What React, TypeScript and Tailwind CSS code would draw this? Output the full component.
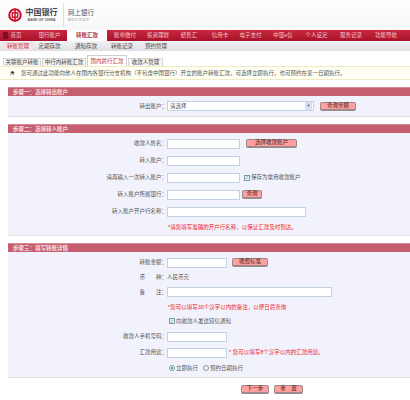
import React from "react";

const font = "font-['Liberation_Sans','Noto_Sans_CJK_SC',sans-serif]";

const navItems = [
  { label: "首页", width: "w-[32px]" },
  { label: "银行账户", width: "w-[35px]" },
  { label: "转账汇款", width: "w-[40px]", active: true },
  { label: "账单缴付", width: "w-[36px]" },
  { label: "投资理财", width: "w-[30px]" },
  { label: "结售汇", width: "w-[32px]" },
  { label: "信用卡", width: "w-[30px]" },
  { label: "电子支付", width: "w-[31px]" },
  { label: "中银e信", width: "w-[34px]" },
  { label: "个人设定", width: "w-[33px]" },
  { label: "服务记录", width: "w-[36px]" },
  { label: "功能导航", width: "w-[34px]" },
];

const subItems = [
  { label: "转账管理", width: "w-[30px]", active: true },
  { label: "定期存款", width: "w-[33px]" },
  { label: "通知存款", width: "w-[40px]" },
  { label: "转账记录", width: "w-[32px]" },
  { label: "预约管理", width: "w-[36px]" },
];

function Logo() {
  return (
    <svg width="14" height="14" viewBox="0 0 34 34" className="shrink-0">
      <circle cx="17" cy="17" r="14" fill="none" stroke="#c8102e" strokeWidth="5" />
      <rect x="10.5" y="11.5" width="13" height="11" rx="1.5" fill="none" stroke="#c8102e" strokeWidth="3.5" />
      <rect x="15.2" y="1" width="3.6" height="32" fill="#c8102e" />
    </svg>
  );
}

function PinkButton({ label, width }: { label: string; width: string }) {
  return (
    <button
      type="button"
      className={`${width} flex h-[9px] shrink-0 items-center justify-center rounded-[2px] border border-b-2 border-[#9a8a8a] bg-[#ff9f9f] p-0 text-[5.5px] leading-none whitespace-nowrap text-[#4a2020]`}
    >
      {label}
    </button>
  );
}

function TextInput({ width }: { width: string }) {
  return <div className={`${width} h-[10px] shrink-0 border border-[#c3d2e3] bg-white`} />;
}

function Row({ label, children, height = "h-[17px]" }: { label?: string; children?: React.ReactNode; height?: string }) {
  return (
    <div className={`flex ${height} items-center`}>
      <div className="w-[159px] shrink-0 whitespace-nowrap text-right text-[5.5px] text-[#555555]">{label}</div>
      <div className="flex flex-1 items-center gap-[5px] text-[5.5px] text-[#555555]">{children}</div>
    </div>
  );
}

function Check({ label }: { label: string }) {
  return (
    <div className="flex items-center gap-[1px] whitespace-nowrap">
      <div className="flex h-[6px] w-[6px] items-center justify-center border border-[#7b9ab5] bg-[#eef3f6] text-[5px] leading-none text-[#2f8a3a]">✓</div>
      <span>{label}</span>
    </div>
  );
}

function Section({ title, children, className }: { title: string; children: React.ReactNode; className: string }) {
  return (
    <div className={`ml-[8px] ${className}`}>
      <div className="flex h-[9px] items-center border-t border-[#d98b97] bg-[#c55f70] pl-[5px] text-[5.5px] font-bold text-[#f5dfe3]">
        {title}
      </div>
      <div className="border-b border-[#e2e2e6] bg-[#f1f2fb]">{children}</div>
    </div>
  );
}

export default function App() {
  return (
    <div className={`h-[400px] w-[410px] overflow-hidden bg-white ${font}`}>
      {/* top logo */}
      <div className="flex h-[30px] items-center bg-gradient-to-b from-white to-[#f7f7f7] pl-[8px]">
        <Logo />
        <div className="ml-[3px] flex w-[33px] flex-col items-center">
          <span className="font-['Liberation_Serif','Noto_Sans_CJK_SC',serif] text-[8px] leading-[10px] font-bold whitespace-nowrap text-[#444444]">中国银行</span>
          <span className="text-[3.5px] leading-[5px] font-bold whitespace-nowrap text-[#666666]">BANK OF CHINA</span>
        </div>
        <div className="ml-[5px] h-[24px] w-px bg-[#dddddd]" />
        <div className="ml-[4px] flex flex-col">
          <span className="text-[6.5px] leading-[9px] whitespace-nowrap text-[#555555]">网上银行</span>
          <span className="font-['Liberation_Serif',serif] text-[4.5px] leading-[6px] tracking-[0.6px] text-[#888888]">BOCNET</span>
        </div>
      </div>

      {/* main nav */}
      <div className="flex h-[11px] bg-gradient-to-b from-[#c9283f] to-[#a8122c]">
        {navItems.map((item, i) => (
          <div
            key={item.label}
            className={`${item.width} relative flex items-center justify-center text-[5.5px] whitespace-nowrap ${
              item.active ? "bg-white font-bold text-[#b23a4a]" : "text-[#f3c9cf]"
            }`}
          >
            {i === 0 && <div className="absolute top-[2px] left-[3px] h-[7px] w-[5px] rounded-[1px] bg-[#7e0c1f]" />}
            {item.label}
          </div>
        ))}
      </div>

      {/* sub nav */}
      <div className="flex h-[10px] items-center bg-gradient-to-b from-[#f2f2f4] to-[#dfdfe3] pl-[3px]">
        {subItems.map((item) => (
          <div
            key={item.label}
            className={`${item.width} flex h-[8px] items-center justify-center text-[5.5px] whitespace-nowrap ${
              item.active ? "rounded-[1px] bg-[#f8dfe2] text-[#b23a4a]" : "text-[#444444]"
            }`}
          >
            {item.label}
          </div>
        ))}
      </div>

      {/* tabs */}
      <div className="mt-[5px] flex h-[10px] items-end gap-[1px] pl-[3px]">
        <div className="flex h-[8px] w-[38px] items-center justify-center border border-b-0 border-[#d5d5d5] bg-[#f5f5f5] text-[5.5px] whitespace-nowrap text-[#444444]">关联账户转账</div>
        <div className="flex h-[8px] w-[44px] items-center justify-center border border-b-0 border-[#d5d5d5] bg-[#f5f5f5] text-[5.5px] whitespace-nowrap text-[#444444]">中行内转账汇款</div>
        <div className="flex h-[11px] w-[40px] items-center justify-center border border-b-0 border-[#cfcfcf] bg-white text-[5.5px] whitespace-nowrap text-[#b23a4a]">国内跨行汇款</div>
        <div className="flex h-[8px] w-[35px] items-center justify-center border border-b-0 border-[#d5d5d5] bg-[#f5f5f5] text-[5.5px] whitespace-nowrap text-[#444444]">收款人管理</div>
      </div>

      {/* notice */}
      <div className="flex h-[14px] items-center border-y border-[#f0ebc4] bg-[#fffef2] pl-[10px] text-[5.5px] text-[#555555]">
        <svg width="5" height="5" viewBox="0 0 10 10" className="shrink-0">
          <path d="M5 0 L8 3 L6.5 4.5 L7 7 L1 2 L3.5 2.5 Z M3 5.5 L1 9" fill="#333333" stroke="#333333" />
        </svg>
        <span className="ml-[6px] whitespace-nowrap">您可通过此功能向他人在国内各银行分支机构（不包含中国银行）开立的账户转账汇款，可选择立即执行，也可预约在某一日期执行。</span>
      </div>

      <Section title="步骤一：选择转出账户" className="mt-[7px]">
        <Row label="转出账户：" height="h-[20px]">
          <div className="flex h-[10px] w-[147px] items-center justify-between border border-[#c3d2e3] bg-white pr-[1px] pl-[2px]">
            <span>请选择</span>
            <span className="flex h-[8px] w-[7px] items-center justify-center bg-[#d5e0f0] text-[4px] text-[#44618a]">▼</span>
          </div>
          <div className="ml-[1px]">
            <PinkButton label="查询余额" width="w-[36px]" />
          </div>
        </Row>
      </Section>

      <Section title="步骤二：选择转入账户" className="mt-[7px]">
        <div className="pt-[2px] pb-[1px]">
          <Row label="收款人姓名：">
            <TextInput width="w-[73px]" />
            <div className="ml-[1px]">
              <PinkButton label="选择收款账户" width="w-[51px]" />
            </div>
          </Row>
          <Row label="转入账户：">
            <TextInput width="w-[73px]" />
          </Row>
          <Row label="请再输入一次转入账户：">
            <TextInput width="w-[73px]" />
            <div className="-ml-[1px]">
              <Check label="保存为常用收款账户" />
            </div>
          </Row>
          <Row label="转入账户所属银行：">
            <TextInput width="w-[73px]" />
            <div className="-ml-[3px]">
              <PinkButton label="查询" width="w-[20px]" />
            </div>
          </Row>
          <Row label="转入账户开户行名称：">
            <TextInput width="w-[139px]" />
          </Row>
          <Row height="h-[14px]">
            <span className="ml-[1px] whitespace-nowrap text-[#ee1c25]">*请您填写准确的开户行名称，以保证汇款及时到达。</span>
          </Row>
        </div>
      </Section>

      <Section title="步骤三：填写转账详情" className="mt-[7px]">
        <div className="pt-[2px] pb-[2px]">
          <Row label="转账金额：" height="h-[17px]">
            <TextInput width="w-[60px]" />
            <PinkButton label="收费标准" width="w-[36px]" />
          </Row>
          <Row label="币　　种：" height="h-[12px]">
            <span>人民币元</span>
          </Row>
          <Row label="备　　注：" height="h-[18px]">
            <TextInput width="w-[165px]" />
          </Row>
          <Row height="h-[12px]">
            <span className="ml-[1px] whitespace-nowrap text-[#ee1c25]">*您可以填写30个汉字以内的备注，以便日后查询</span>
          </Row>
          <Row height="h-[16px]">
            <div className="ml-[2px]">
              <Check label="向收款人发送短信通知" />
            </div>
          </Row>
          <Row label="收款人手机号码：" height="h-[15px]">
            <TextInput width="w-[60px]" />
          </Row>
          <Row label="汇款用途：" height="h-[17px]">
            <TextInput width="w-[60px]" />
            <span className="-ml-[3px] whitespace-nowrap text-[#ee1c25]">* 您可以填写8个汉字以内的汇款用途。</span>
          </Row>
          <Row height="h-[14px]">
            <div className="ml-[2px] flex items-center gap-[5px]">
              <div className="flex items-center gap-[1px]">
                <div className="flex h-[6px] w-[6px] items-center justify-center rounded-full border border-[#7b9ab5] bg-[#eef3f6]">
                  <div className="h-[2px] w-[2px] rounded-full bg-[#2f8a3a]" />
                </div>
                <span>立即执行</span>
              </div>
              <div className="flex items-center gap-[1px]">
                <div className="h-[6px] w-[6px] rounded-full border border-[#7b9ab5] bg-[#eef3f6]" />
                <span>预约日期执行</span>
              </div>
            </div>
          </Row>
        </div>
      </Section>

      {/* bottom buttons */}
      <div className="mt-[7px] flex gap-[5px] pl-[241px]">
        <PinkButton label="下一步" width="w-[28px]" />
        <PinkButton label="重　置" width="w-[29px]" />
      </div>
    </div>
  );
}
